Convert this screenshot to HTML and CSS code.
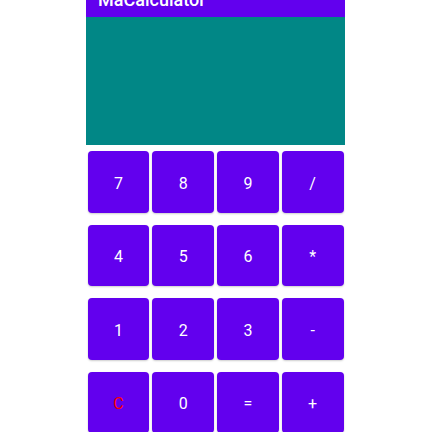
FILE: index.html
```html
<!DOCTYPE html>
<html>
<head>
<meta charset="utf-8">
<link rel="stylesheet" href="styles.css">
</head>
<body>
<div class="app">
  <header class="appbar"><span class="title">MaCalculator</span></header>
  <div class="display"></div>
  <div class="keys">
    <div class="cell"><button class="key">7</button></div>
    <div class="cell"><button class="key">8</button></div>
    <div class="cell"><button class="key">9</button></div>
    <div class="cell"><button class="key">/</button></div>
    <div class="cell"><button class="key">4</button></div>
    <div class="cell"><button class="key">5</button></div>
    <div class="cell"><button class="key">6</button></div>
    <div class="cell"><button class="key">*</button></div>
    <div class="cell"><button class="key">1</button></div>
    <div class="cell"><button class="key">2</button></div>
    <div class="cell"><button class="key">3</button></div>
    <div class="cell"><button class="key">-</button></div>
    <div class="cell"><button class="key clear">C</button></div>
    <div class="cell"><button class="key">0</button></div>
    <div class="cell"><button class="key">=</button></div>
    <div class="cell"><button class="key">+</button></div>
  </div>
</div>
</body>
</html>
```
FILE: styles.css
```css
html, body {
  margin: 0;
  padding: 0;
  background: #ffffff;
  overflow: hidden;
}
.app {
  width: 259px;
  margin-left: 86px;
  font-family: Roboto, "Liberation Sans", sans-serif;
}
.appbar {
  display: flex;
  height: 17px;
  background: #6200ee;
  overflow: hidden;
  padding-left: 12px;
}
.title {
  color: #ffffff;
  font-size: 18px;
  font-weight: 500;
  line-height: 20px;
  margin-top: -10px;
}
.display {
  height: 128px;
  background: #018786;
}
.keys {
  display: grid;
  grid-template-columns: repeat(4, 1fr);
  grid-auto-rows: 73.5px;
}
.cell {
  padding: 6px 1.5px;
  display: flex;
}
.key {
  flex: 1;
  border: none;
  border-radius: 4px;
  background: #6200ee;
  color: #ffffff;
  font-family: Roboto, "Liberation Sans", sans-serif;
  font-size: 16px;
  font-weight: 400;
  padding: 3px 0 0;
  box-shadow: 0 1px 2px rgba(0, 0, 0, 0.2);
}
.key.clear {
  color: #ff0000;
}
```
